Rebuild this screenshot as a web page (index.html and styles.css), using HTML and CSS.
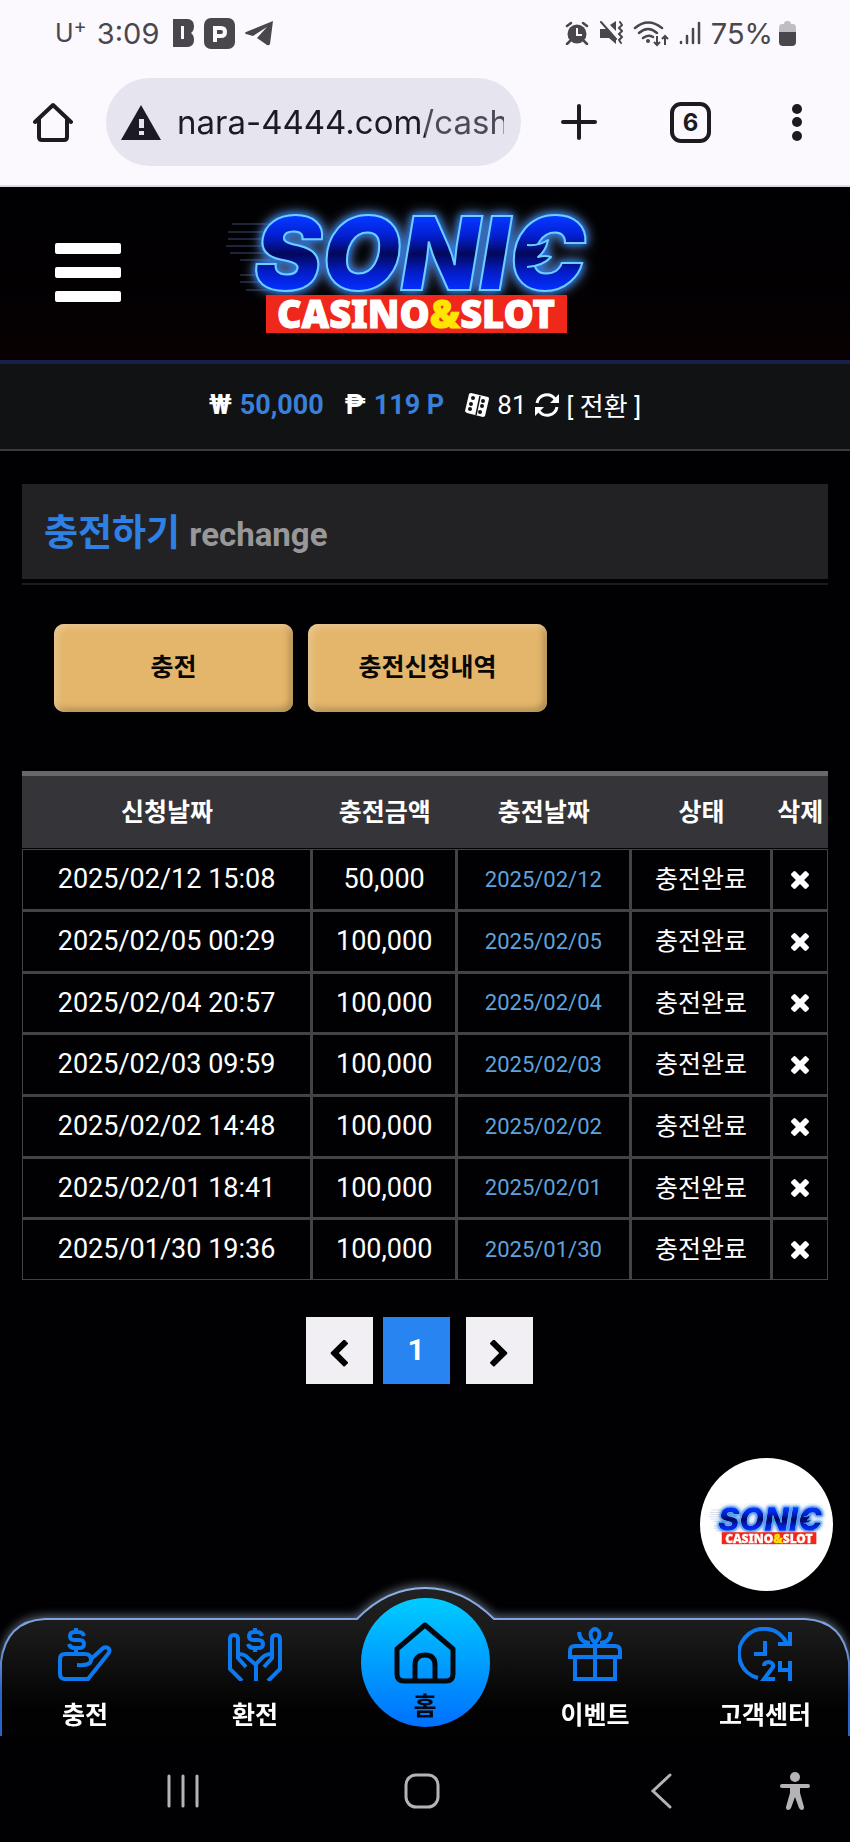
FILE: index.html
```html
<!DOCTYPE html>
<html lang="ko">
<head>
  <meta charset="UTF-8">
  <meta name="viewport" content="width=device-width, initial-scale=1.0">
  <title>충전하기</title>
  <link rel="stylesheet" href="styles.css">
</head>
<body>
  <div class="status-bar">
    <div class="status-left">
      <span class="carrier">U<sup>+</sup></span>
      <span class="clock">3:09</span>
      <svg class="notice" width="21" height="28" viewBox="0 0 21 28"><path fill="#49474d" fill-rule="evenodd" d="M0 0h15q6 1 6 7 0 5-3 7 3 2 3 7 0 6-6 7H0zM8 7v13h3V7z"/></svg>
      <svg class="notice" width="31" height="31" viewBox="0 0 31 31"><rect width="31" height="31" rx="7" fill="#49474d"/><path fill="none" stroke="#fbf9fe" stroke-width="4" d="M11 24V10h6q4 0 4 4t-4 4h-6"/></svg>
      <svg class="notice" width="29" height="25" viewBox="0 0 29 25"><path fill="#49474d" d="M28 0L1 11q-2 1 0 2l7 2L22 6 12 17l10 7q2 1 3-1z"/></svg>
    </div>
    <div class="status-right">
      <svg width="24" height="24" viewBox="0 0 24 24"><circle cx="12" cy="13" r="9.5" fill="#49474d"/><path fill="none" stroke="#49474d" stroke-width="2.5" stroke-linecap="round" d="M2 5l4-3M22 5l-4-3M5 20l-3 3M19 20l3 3"/><path fill="none" stroke="#fbf9fe" stroke-width="2" d="M12 7v7h5"/></svg>
      <svg width="24" height="24" viewBox="0 0 24 24"><path fill="#49474d" d="M1 8h6l1-1 9 10v6l-7-6H1zM11 4l6-4v10z"/><path fill="none" stroke="#49474d" stroke-width="2" stroke-linecap="round" d="M2 1l15 17M21 1l2 3-3 3 3 3-3 3 3 3-3 3 2 3"/></svg>
      <svg width="36" height="27" viewBox="0 0 36 27"><path fill="none" stroke="#49474d" stroke-width="2.5" stroke-linecap="round" d="M2 8q13-11 27 0M6 13q9-8 18 0M10 18q5-4 10-1"/><circle cx="15" cy="21" r="2" fill="#49474d"/><path fill="none" stroke="#49474d" stroke-width="2" d="M24 16v9M21 22l3 3 3-3M32 25v-9M29 19l3-3 3 3"/></svg>
      <svg width="22" height="24" viewBox="0 0 22 24"><path stroke="#49474d" stroke-width="2.5" stroke-linecap="round" d="M2 21v1M8 15v7M14 8v14M20 2v20"/></svg>
      <span class="percent">75%</span>
      <svg width="17" height="25" viewBox="0 0 17 25"><path fill="#bfbdc2" d="M5 3q0-3 3-3h1q3 0 3 3h2q3 0 3 4v4H0V7q0-4 3-4z"/><path fill="#49474d" d="M0 11h17v10q0 4-4 4H4q-4 0-4-4z"/></svg>
    </div>
  </div>

  <div class="toolbar">
    <button class="tool" type="button" aria-label="홈">
      <svg width="40" height="40" viewBox="0 0 40 40"><path fill="none" stroke="#1c1b20" stroke-width="4" stroke-linecap="round" stroke-linejoin="round" d="M2 20L20 3l18 17M6 17v18q0 3 3 3h22q3 0 3-3V17"/></svg>
    </button>
    <div class="address">
      <svg width="40" height="35" viewBox="0 0 40 35"><path fill="#1c1b24" d="M20 0l20 35H0z"/><path fill="#e6e5ef" d="M18 14h5v9h-5zM18 26h5v4h-5z"/></svg>
      <input class="url" type="text" value="nara-4444.com/cash" aria-label="주소">
    </div>
    <button class="tool new-tab" type="button" aria-label="새 탭">
      <svg width="36" height="36" viewBox="0 0 36 36"><path stroke="#1c1b20" stroke-width="4" stroke-linecap="round" d="M18 2v32M2 18h32"/></svg>
    </button>
    <button class="tool tabs" type="button">6</button>
    <button class="tool more" type="button" aria-label="메뉴">
      <svg width="10" height="37" viewBox="0 0 10 37"><g fill="#1c1b20"><circle cx="5" cy="5" r="5"/><circle cx="5" cy="18" r="5"/><circle cx="5" cy="32" r="5"/></g></svg>
    </button>
  </div>

  <header class="header">
    <button class="menu-btn" type="button" aria-label="전체 메뉴"><i></i><i></i><i></i></button>
    <a class="logo" href="#">
      <svg width="410" height="140" viewBox="0 0 410 140" overflow="visible">
        <defs>
          <linearGradient id="blue" x1="0" y1="16" x2="0" y2="88" gradientUnits="userSpaceOnUse">
            <stop offset="0" stop-color="#0436ff"/>
            <stop offset="0.25" stop-color="#031fd0"/>
            <stop offset="0.5" stop-color="#02085a"/>
            <stop offset="0.75" stop-color="#031cc8"/>
            <stop offset="1" stop-color="#0430ff"/>
          </linearGradient>
        </defs>
        <g id="sonic">
          <path stroke="#5568a0" stroke-width="1" opacity="0.7" d="M12 22h40M8 30h40M8 37h36M6 44h40M10 51h40M20 58h30M20 73h24M20 80h24M26 88h24"/>
          <g class="glow">
            <text class="logo-top" x="34" y="88">SONIC</text>
            <path fill="url(#blue)" stroke="#6ccfff" stroke-width="2" stroke-linejoin="round" d="M307 43q12 1 21-5-2 11-10 17 7-2 13 0-8 9-24 10"/>
          </g>
          <rect x="46" y="93" width="301" height="38" fill="#f0271b"/>
          <text class="logo-sub" x="196" y="126">CASINO<tspan class="and">&amp;</tspan>SLOT</text>
        </g>
      </svg>
    </a>
  </header>

  <div class="wallet">
    <span><b class="sign">₩</b><b class="money">50,000</b></span>
    <span><b class="sign">₱</b><b class="money">119 P</b></span>
    <span>
      <svg width="24" height="24" viewBox="0 0 24 24"><path fill="#fff" d="M6 0l17 4q1 0 1 2l-4 17q-1 1-2 1L2 20q-2-1-2-2L4 1q1-1 2-1z"/><path stroke="#111214" stroke-width="1.5" d="M15 3l-4 19"/><g fill="#111214"><circle cx="8" cy="5" r="2"/><circle cx="6" cy="11" r="2"/><circle cx="5" cy="16" r="2"/><circle cx="18" cy="8" r="2"/><circle cx="17" cy="13" r="2"/><circle cx="15" cy="19" r="2"/></g></svg>
      81
      <svg width="24" height="24" viewBox="0 0 24 24"><path fill="none" stroke="#fff" stroke-width="3" d="M2 10a10 10 0 0 1 18-4M22 14a10 10 0 0 1-18 4"/><path fill="#fff" d="M24 1v9h-9zM0 23v-9h9z"/></svg>
      <a href="#">[ 전환 ]</a>
    </span>
  </div>

  <main class="content">
    <h1 class="title">충전하기 <small>rechange</small></h1>

    <div class="buttons">
      <button type="button">충전</button>
      <button type="button">충전신청내역</button>
    </div>

    <table class="history">
      <thead>
        <tr>
          <th class="c-time">신청날짜</th>
          <th class="c-amount">충전금액</th>
          <th class="c-date">충전날짜</th>
          <th class="c-state">상태</th>
          <th class="c-del">삭제</th>
        </tr>
      </thead>
      <tbody id="rows"></tbody>
    </table>

    <nav class="paging">
      <a href="#" aria-label="이전"><svg width="18" height="27" viewBox="371 71 1075 1567"><path d="M1427 301l-531 531 531 531q19 19 19 45t-19 45l-166 166q-19 19-45 19t-45-19l-742-742q-19-19-19-45t19-45l742-742q19-19 45-19t45 19l166 166q19 19 19 45t-19 45z"/></svg></a>
      <a href="#" class="on">1</a>
      <a href="#" class="next" aria-label="다음"><svg width="18" height="27" viewBox="371 71 1075 1567"><path transform="translate(1817 0) scale(-1 1)" d="M1427 301l-531 531 531 531q19 19 19 45t-19 45l-166 166q-19 19-45 19t-45-19l-742-742q-19-19-19-45t19-45l742-742q19-19 45-19t45 19l166 166q19 19 19 45t-19 45z"/></svg></a>
    </nav>
  </main>

  <a class="floating" href="#" aria-label="SONIC">
    <svg width="120" height="44" viewBox="0 0 380 140"><use href="#sonic"/></svg>
  </a>

  <nav class="bottom-nav">
    <svg class="nav-bg" viewBox="0 0 850 149" preserveAspectRatio="none">
      <defs>
        <linearGradient id="navFill" x1="0" y1="0" x2="0" y2="1">
          <stop offset="0" stop-color="#222"/>
          <stop offset="0.3" stop-color="#191919"/>
          <stop offset="0.8" stop-color="#020203"/>
        </linearGradient>
        <linearGradient id="navLine" x1="0" y1="0" x2="0" y2="1">
          <stop offset="0" stop-color="#8fb2ea"/>
          <stop offset="0.4" stop-color="#7396d8"/>
          <stop offset="0.7" stop-color="#2a62c8"/>
        </linearGradient>
      </defs>
      <path fill="url(#navFill)" stroke="url(#navLine)" stroke-width="2" d="M1 152V75Q6 34 45 32H357Q387 1 425 1T494 32H805Q844 34 849 75V152"/>
    </svg>
    <a href="#">
      <svg class="icon" viewBox="0 0 54 54"><path d="M26 9q-1-4-6-4h-3q-5 0-5 4t5 4h4q5 0 5 4t-5 4h-4q-5 0-6-4M18 1v4M18 21v5M19 38q14 1 14-5 0-6-6-6H7q-5 0-5 5v15q0 5 5 5h23L50 27q3-4 0-6-3-2-6 1l-12 11"/></svg>
      충전
    </a>
    <a href="#">
      <svg class="icon" viewBox="0 0 54 54"><path d="M34 9q-1-4-5-4h-3q-5 0-5 4t5 4h4q5 0 5 4t-5 4h-4q-5 0-6-4M27 1v4M27 21v4M14 54L2 42V12q0-4 4-4t4 4v19l8 9M10 27q7 0 10 4l8 7v16M40 54l12-12V12q0-4-4-4t-4 4v19l-8 9M44 27q-7 0-10 4l-6 6"/></svg>
      환전
    </a>
    <a href="#" class="home">
      <svg width="62" height="62" viewBox="0 0 62 62"><path fill="none" stroke="#05080e" stroke-width="5" stroke-linejoin="round" d="M31 3L3 27v25q0 7 7 7h42q7 0 7-7V27zM21 59V43q0-10 10-10t10 10v16"/></svg>
      홈
    </a>
    <a href="#">
      <svg class="icon" viewBox="0 0 54 54"><path d="M7 31v21h40V31M27 18v34M2 30V24q0-5 5-5h40q5 0 5 5v6zM27 16q-6-6-4-11 4-6 8 0 2 5-4 11zM11 5q1 11 11 11M43 5q-1 11-11 11"/></svg>
      이벤트
    </a>
    <a href="#">
      <svg class="icon" viewBox="0 0 54 54"><path d="M20 51A25 25 0 1 1 49 17M52 5v12H40M27 14v13H16M26 39q0-4 5-4 5 1 4 5L26 52h11M42 34v9h10M52 34v20"/></svg>
      고객센터
    </a>
  </nav>

  <div class="system-nav">
    <button type="button" aria-label="최근 앱"><svg width="34" height="34" viewBox="0 0 34 34"><path stroke="#b5b3b8" stroke-width="3" stroke-linecap="round" d="M3 2v30M17 2v30M31 2v30"/></svg></button>
    <button type="button" aria-label="홈 화면"><svg width="36" height="36" viewBox="0 0 36 36"><rect x="2" y="2" width="32" height="32" rx="10" fill="none" stroke="#b5b3b8" stroke-width="3"/></svg></button>
    <button type="button" aria-label="뒤로"><svg width="22" height="36" viewBox="0 0 22 36"><path fill="none" stroke="#b5b3b8" stroke-width="3" stroke-linecap="round" d="M20 2L3 18l17 16"/></svg></button>
    <button type="button" aria-label="접근성"><svg width="30" height="38" viewBox="0 0 30 38"><circle cx="15" cy="5" r="5" fill="#b5b3b8"/><path fill="#b5b3b8" d="M2 12h26q2 0 2 2t-2 2h-8v5l4 14q0 3-2 3t-3-2l-4-11-4 11q-1 2-3 2t-2-3l4-14v-5H2q-2 0-2-2t2-2z"/></svg></button>
  </div>

  <script src="script.js"></script>
</body>
</html>
```

FILE: styles.css
```css
* {
  box-sizing: border-box;
}

body {
  display: flex;
  flex-direction: column;
  min-height: 100vh;
  margin: 0;
  background-color: #010103;
  color: #fff;
  font-family: Roboto, "Noto Sans CJK KR", sans-serif;
  font-size: 25px;
}

a {
  color: inherit;
  text-decoration: none;
}

button {
  padding: 0;
  border: none;
  background: none;
  font-family: inherit;
  cursor: pointer;
}

svg {
  flex-shrink: 0;
}

/* Phone status bar */
.status-bar {
  display: flex;
  align-items: center;
  justify-content: space-between;
  height: 66px;
  padding: 0 54px 0 55px;
  background-color: #fbf9fe;
  color: #49474d;
  font-family: Inter, sans-serif;
  font-size: 29px;
}

.status-left,
.status-right {
  display: flex;
  align-items: center;
  gap: 10px;
}

.carrier {
  font-size: 25px;
}

.carrier sup {
  font-size: 20px;
  line-height: 0;
}

.clock {
  margin-right: 4px;
}

.percent {
  margin-right: -4px;
}

/* Browser toolbar */
.toolbar {
  display: flex;
  align-items: center;
  padding: 12px 48px 19px 33px;
  border-bottom: 2px solid #dddbe2;
  background-color: #fbf9fe;
}

.tool {
  display: flex;
  flex-shrink: 0;
}

.address {
  display: flex;
  align-items: center;
  flex: 1;
  gap: 16px;
  min-width: 0;
  height: 88px;
  margin: 0 40px 0 33px;
  padding: 0 17px 0 15px;
  border-radius: 44px;
  background-color: #e6e5ef;
}

.url {
  flex: 1;
  min-width: 0;
  padding: 0;
  border: none;
  background: linear-gradient(90deg, #1c1b24 248px, #4c4a55 248px);
  -webkit-background-clip: text;
  background-clip: text;
  color: transparent;
  font-family: Inter, sans-serif;
  font-size: 33px;
}

.tabs {
  align-items: center;
  justify-content: center;
  width: 41px;
  height: 41px;
  margin: 0 81px 0 73px;
  border: 4px solid #1c1b20;
  border-radius: 11px;
  color: #1c1b20;
  font-family: Inter, sans-serif;
  font-size: 24px;
  font-weight: 700;
}

/* Site header */
.header {
  display: grid;
  grid-template-columns: 1fr auto 1fr;
  align-items: center;
  height: 177px;
  padding: 0 55px 3px;
  border-bottom: 4px solid #16224a;
  background: linear-gradient(#000002, #040003 70%, #0a0001);
}

.menu-btn {
  display: flex;
  flex-direction: column;
  gap: 13px;
  width: 66px;
}

.menu-btn i {
  height: 11px;
  border-radius: 2px;
  background-color: #fff;
}

.logo {
  display: flex;
}

.glow {
  filter: drop-shadow(0 0 3px #0a6cff) drop-shadow(0 0 6px #6a96d8);
}

.logo-top {
  fill: url(#blue);
  stroke: #6ccfff;
  stroke-width: 2px;
  font-family: Inter, sans-serif;
  font-size: 102px;
  font-style: italic;
  font-weight: 900;
}

.logo-sub {
  fill: #fff;
  stroke: #fff;
  stroke-width: 1px;
  font-family: "Noto Sans", sans-serif;
  font-size: 38px;
  font-weight: 900;
  text-anchor: middle;
}

.logo-sub .and {
  fill: #ffe600;
  stroke: #ffe600;
}

.wallet {
  display: flex;
  align-items: center;
  justify-content: center;
  gap: 21px;
  height: 87px;
  padding-bottom: 4px;
  border-bottom: 2px solid #3a3a3c;
  background-color: #111214;
  font-size: 26px;
}

.wallet span {
  display: flex;
  align-items: center;
  gap: 8px;
}

.wallet .sign {
  font-size: 28px;
}

.wallet .money {
  color: #3a80d8;
  font-size: 27px;
}

/* Page content */
.content {
  flex: 1;
  padding: 33px 22px 0;
}

.title {
  position: relative;
  margin: 0 0 45px;
  padding: 5px 22px 0;
  background-color: #222224;
  color: #2f80e4;
  font-size: 37px;
  line-height: 90px;
}

.title::after {
  content: "";
  position: absolute;
  left: 0;
  right: 0;
  bottom: -6px;
  height: 2px;
  background-color: #1b1b1d;
}

.title small {
  color: #98989b;
  font-size: 33px;
  line-height: 1;
}

.buttons {
  display: flex;
  gap: 15px;
  margin-bottom: 59px;
  padding-left: 32px;
}

.buttons button {
  width: 239px;
  height: 88px;
  padding-bottom: 6px;
  border-radius: 10px;
  background-color: #e4b66c;
  box-shadow: inset 3px 3px 6px #e8c894, inset -3px -3px 7px #a8874e;
  color: #0a0806;
  font-size: 25px;
  font-weight: 700;
}

.history {
  width: 100%;
  border-spacing: 0;
  table-layout: fixed;
  text-align: center;
}

.c-time {
  width: 36%;
}

.c-amount {
  width: 18%;
}

.c-date {
  width: 21.5%;
}

.c-state {
  width: 17.6%;
}

.history th {
  height: 78px;
  padding: 0 0 4px;
  border-top: 5px solid #68686b;
  border-bottom: 1px solid #010103;
  background-color: #353438;
  font-size: 25px;
}

.history td {
  height: 62px;
  padding: 0;
  border: 1px solid #434246;
  border-right-width: 2px;
  border-bottom-width: 2px;
  line-height: 1;
}

.history tr:nth-child(3n) td {
  height: 61px;
}

.history td:last-child {
  border-right-width: 1px;
}

.history tr:last-child td {
  height: 61px;
  border-bottom-width: 1px;
}

.history .num {
  font-size: 27px;
}

.history .date {
  color: #5fa3dc;
  font-size: 22px;
}

.history button {
  display: block;
  margin: 0 auto;
}

.history button svg {
  display: block;
}

.paging {
  display: flex;
  justify-content: center;
  gap: 10px;
  margin-top: 37px;
  padding-right: 12px;
}

.paging a {
  display: flex;
  align-items: center;
  justify-content: center;
  width: 67px;
  height: 67px;
  padding-top: 6px;
  background-color: #f1eff4;
}

.paging .on {
  padding: 0 0 3px;
  background-color: #2884f0;
  font-size: 30px;
  font-weight: 700;
}

.paging .next {
  margin-left: 6px;
}

.floating {
  display: flex;
  position: fixed;
  right: 17px;
  bottom: 251px;
  align-items: center;
  justify-content: center;
  width: 133px;
  height: 133px;
  border-radius: 50%;
  background-color: #fff;
}

/* Bottom menu */
.bottom-nav {
  display: grid;
  position: relative;
  grid-template-columns: repeat(5, 1fr);
  align-items: end;
  height: 149px;
  font-weight: 700;
}

.bottom-nav a {
  display: flex;
  position: relative;
  flex-direction: column;
  align-items: center;
  gap: 17px;
  padding-bottom: 2px;
  line-height: 36px;
}

.nav-bg {
  position: absolute;
  width: 100%;
  height: 149px;
  overflow: visible;
  clip-path: inset(-20px 0 0 0);
  filter: drop-shadow(0 -2px 5px #5a6472);
}

.icon {
  width: 54px;
  height: 54px;
  fill: none;
  stroke: #0c79f0;
  stroke-width: 4px;
}

.bottom-nav .home {
  gap: 5px;
  justify-self: center;
  width: 129px;
  height: 129px;
  margin-bottom: 9px;
  padding-top: 24px;
  border-radius: 50%;
  background: linear-gradient(#00ccff, #0070ff);
  color: #05080e;
}

/* Android navigation */
.system-nav {
  display: grid;
  grid-template-columns: 1fr 1fr 1fr 30px;
  align-items: center;
  justify-items: center;
  height: 106px;
  padding: 4px 40px 0 64px;
}

.system-nav button {
  display: flex;
}
```

FILE: script.js
```javascript
const charges = [
  ['2025/02/12 15:08', '50,000'],
  ['2025/02/05 00:29', '100,000'],
  ['2025/02/04 20:57', '100,000'],
  ['2025/02/03 09:59', '100,000'],
  ['2025/02/02 14:48', '100,000'],
  ['2025/02/01 18:41', '100,000'],
  ['2025/01/30 19:36', '100,000']
];

const deleteIcon = '<svg width="18" height="18" viewBox="302 366 1188 1188"><path fill="#fff" d="M1490 1322q0 40-28 68l-136 136q-28 28-68 28t-68-28l-294-294-294 294q-28 28-68 28t-68-28l-136-136q-28-28-28-68t28-68l294-294-294-294q-28-28-28-68t28-68l136-136q28-28 68-28t68 28l294 294 294-294q28-28 68-28t68 28l136 136q28 28 28 68t-28 68l-294 294 294 294q28 28 28 68z"/></svg>';

const rows = document.getElementById('rows');

charges.forEach(([time, amount]) => {
  const row = rows.insertRow();
  row.innerHTML = `<td class="num">${time}</td>
                   <td class="num">${amount}</td>
                   <td class="date">${time.split(' ')[0]}</td>
                   <td>충전완료</td>
                   <td><button type="button" aria-label="삭제">${deleteIcon}</button></td>`;
});
```
